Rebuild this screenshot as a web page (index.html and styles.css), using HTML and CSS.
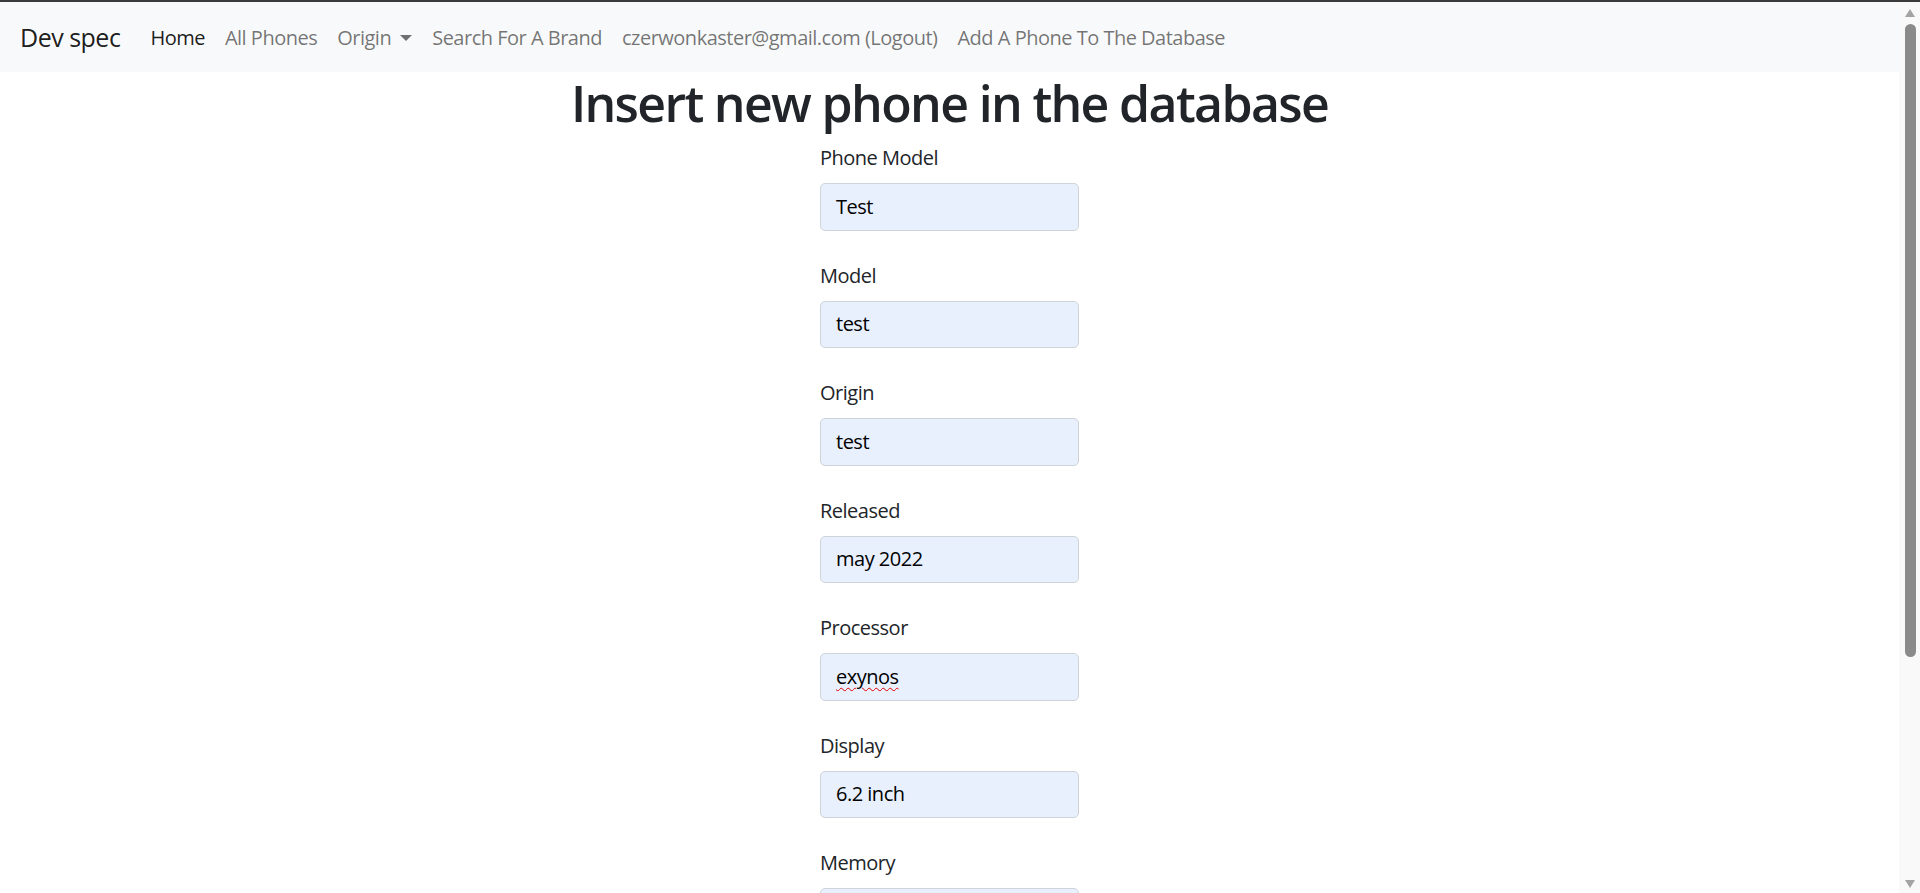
FILE: index.html
```html
<!DOCTYPE html>
<html lang="en">
<head>
<meta charset="utf-8">
<title>Dev spec</title>
<link rel="stylesheet" href="styles.css">
</head>
<body>
<div class="frame">
  <div class="viewport">
    <nav class="navbar">
      <a class="brand" href="#">Dev spec</a>
      <ul class="nav">
        <li><a class="nav-link active" href="#">Home</a></li>
        <li><a class="nav-link" href="#">All Phones</a></li>
        <li><a class="nav-link dropdown" href="#">Origin</a></li>
        <li><a class="nav-link" href="#">Search For A Brand</a></li>
        <li><a class="nav-link" href="#">czerwonkaster@gmail.com (Logout)</a></li>
        <li><a class="nav-link" href="#">Add A Phone To The Database</a></li>
      </ul>
    </nav>
    <main class="content">
      <h1 class="title">Insert new phone in the database</h1>
      <form class="phone-form">
        <div class="field"><label class="label">Phone Model</label><div class="input">Test</div></div>
        <div class="field"><label class="label">Model</label><div class="input">test</div></div>
        <div class="field"><label class="label">Origin</label><div class="input">test</div></div>
        <div class="field"><label class="label">Released</label><div class="input">may 2022</div></div>
        <div class="field"><label class="label">Processor</label><div class="input"><span class="misspelled">exynos</span></div></div>
        <div class="field"><label class="label">Display</label><div class="input">6.2 inch</div></div>
        <div class="field"><label class="label">Memory</label><div class="input">&nbsp;</div></div>
      </form>
    </main>
  </div>
  <div class="scrollbar">
    <div class="arrow up"></div>
    <div class="thumb"></div>
    <div class="track-rest"></div>
    <div class="arrow down"></div>
  </div>
</div>
</body>
</html>
```

FILE: styles.css
```css
* { box-sizing: border-box; }
html, body { margin: 0; padding: 0; }
body {
  height: 893px;
  overflow: hidden;
  font-family: "Open Sans", "Noto Sans", sans-serif;
  font-size: 20px;
  line-height: 1.5;
  letter-spacing: -0.025em;
  color: #212529;
  background: #fff;
  border-top: 2px solid #3b3b3b;
}
.frame {
  display: flex;
  height: 891px;
}
.viewport {
  flex: 1;
  overflow: hidden;
  min-width: 0;
}
.navbar {
  display: flex;
  align-items: center;
  height: 70px;
  padding: 11px 20px 9px;
  background: #f8f9fa;
}
.brand {
  font-size: 25px;
  line-height: 37.5px;
  color: rgba(0,0,0,.9);
  text-decoration: none;
  margin-right: 20px;
  white-space: nowrap;
}
.nav {
  display: flex;
  list-style: none;
  margin: 0;
  padding: 0;
}
.nav-link {
  display: block;
  padding: 10px 10px;
  color: rgba(0,0,0,.55);
  text-decoration: none;
  white-space: nowrap;
}
.nav-link.active { color: rgba(0,0,0,.9); }
.dropdown::after {
  content: "";
  display: inline-block;
  margin-left: 9px;
  vertical-align: 4px;
  border-top: 6px solid;
  border-left: 6px solid transparent;
  border-right: 6px solid transparent;
}
.content {
  display: flex;
  flex-direction: column;
  align-items: center;
  padding-top: 1px;
}
.title {
  margin: 0 0 10px;
  font-size: 50px;
  font-weight: 600;
  line-height: 1.2;
  letter-spacing: -0.033em;
}
.phone-form {
  width: 259px;
  display: flex;
  flex-direction: column;
}
.field { margin-bottom: 30px; }
.label {
  display: block;
  margin-bottom: 10px;
}
.input {
  height: 47.5px;
  padding: 7.5px 15px;
  background: #e8f0fe;
  border: 1.25px solid #ced4da;
  border-radius: 5px;
  color: #000;
}
.misspelled {
  text-decoration: underline wavy #e00000;
  text-decoration-thickness: 1px;
  text-underline-offset: 3px;
}
.scrollbar {
  width: 21px;
  background: #f9f9f9;
  display: flex;
  flex-direction: column;
  align-items: center;
  padding: 7px 0 5px;
}
.arrow {
  width: 0; height: 0;
  border-left: 5.5px solid transparent;
  border-right: 5.5px solid transparent;
}
.arrow.up { border-bottom: 8px solid #a3a3a3; margin-bottom: 7px; }
.arrow.down { border-top: 8px solid #a3a3a3; }
.thumb {
  width: 11px;
  height: 633px;
  background: #8a8a8a;
  border-radius: 6px;
  margin-left: 1px;
}
.track-rest { flex: 1; }
```
